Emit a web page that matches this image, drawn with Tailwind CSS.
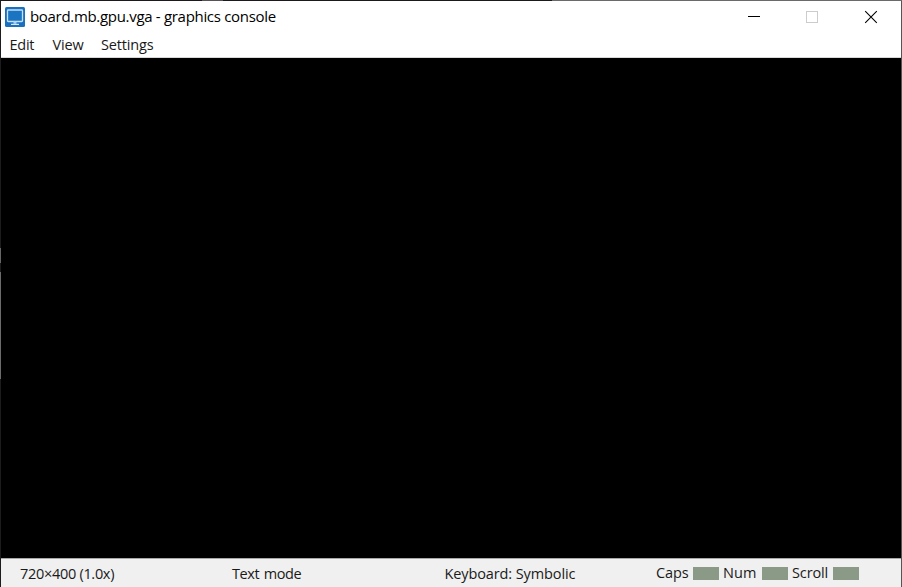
<!DOCTYPE html>
<html lang="en">
<head>
<meta charset="utf-8">
<title>board.mb.gpu.vga - graphics console</title>
<script src="https://cdn.jsdelivr.net/npm/@tailwindcss/browser@4"></script>
</head>
<body class="w-[902px] h-[587px] overflow-hidden bg-black font-['Open_Sans','Noto_Sans',sans-serif] text-[14.5px] text-black whitespace-nowrap">
<div class="flex h-[587px] w-[902px] flex-col">
  <!-- desktop strip above the window -->
  <div class="flex h-px shrink-0"><div class="w-[202px] bg-[#1b191b]"></div><div class="w-[21px] bg-[#555355]"></div><div class="w-[329px] bg-[#1b191b]"></div><div class="grow bg-[#6b696b]"></div></div>
  <div class="flex min-h-0 grow">
    <!-- left desktop edge -->
    <div class="flex w-px shrink-0 flex-col bg-[#1c1c1c]"><div class="mt-[247px] h-[15px] bg-[#666]"></div><div class="mt-[9px] h-[107px] bg-[#6b6b6b]"></div></div>
    <main class="flex w-[900px] flex-col bg-white">
      <header class="flex h-[32px] shrink-0 items-center">
        <svg class="ml-1 h-5 w-5 shrink-0" viewBox="0 0 20 20"><rect width="20" height="20" rx="1.5" fill="#1b70bd"/><rect x="2.500" y="3" width="15" height="11.500" rx=".8" fill="#1b74c2" stroke="#c5e0f7" stroke-width="1.300"/><path d="M8.500 14.500h3v2.300h-3z" fill="#a9d0f0"/><path d="M6 17.400h8" stroke="#d5eafc" stroke-width="1.200"/></svg>
        <h1 class="ml-[5px] w-[250px] pb-[2px] text-[15px] leading-5 tracking-[-0.31px]">board.mb.gpu.vga - graphics console</h1>
        <div class="ml-auto flex h-[30px] items-center text-black">
          <svg class="h-[30px] w-[58px]" viewBox="0 0 58 30" shape-rendering="crispEdges"><path d="M22 14.500h12" stroke="currentColor"/></svg>
          <svg class="h-[30px] w-[58px]" viewBox="0 0 58 30" shape-rendering="crispEdges"><path d="M22.500 9.500h11v11h-11z" fill="none" stroke="#ccc"/></svg>
          <svg class="h-[30px] w-[59px]" viewBox="0 0 59 30"><path d="m23.200 9.200 11.600 11.600m0-11.600-11.600 11.600" fill="none" stroke="currentColor" stroke-width="1.1"/></svg>
        </div>
      </header>
      <nav class="flex h-[25px] shrink-0 items-center border-b border-[#d8d8d8] pb-px pl-[8.5px] leading-5 text-[#1a1a1a]">
        <span class="w-[43px] tracking-[-0.25px]">Edit</span><span class="w-[48.5px] tracking-[-0.18px]">View</span><span class="tracking-[-0.17px]">Settings</span>
      </nav>
      <section class="grow bg-black"></section>
      <footer class="flex h-[29px] shrink-0 items-center border-t border-[#a8a8a8] bg-[#f0f0f0] pt-px pl-[19px] leading-5 text-[#1a1a1a]">
        <span class="w-[212px] tracking-[-0.3px]">720×400 (1.0x)</span>
        <span class="w-[212.5px] tracking-[-0.4px] [word-spacing:1px]">Text mode</span>
        <span class="w-[211.5px] tracking-[-0.11px]">Keyboard: Symbolic</span>
        <div class="flex h-5 items-center pb-px">
          <span class="w-[37px] tracking-[-0.12px]">Caps</span><i class="h-[13px] w-[26px] bg-[#8a9a87]"></i>
          <span class="ml-1 w-[39px] tracking-[0.05px]">Num</span><i class="h-[13px] w-[26px] bg-[#8a9a87]"></i>
          <span class="ml-1 w-[41px] tracking-[-0.13px]">Scroll</span><i class="h-[13px] w-[26px] bg-[#8a9a87]"></i>
        </div>
      </footer>
    </main>
    <!-- right desktop edge -->
    <div class="w-px shrink-0 bg-[#555]"></div>
  </div>
</div>
</body>
</html>
